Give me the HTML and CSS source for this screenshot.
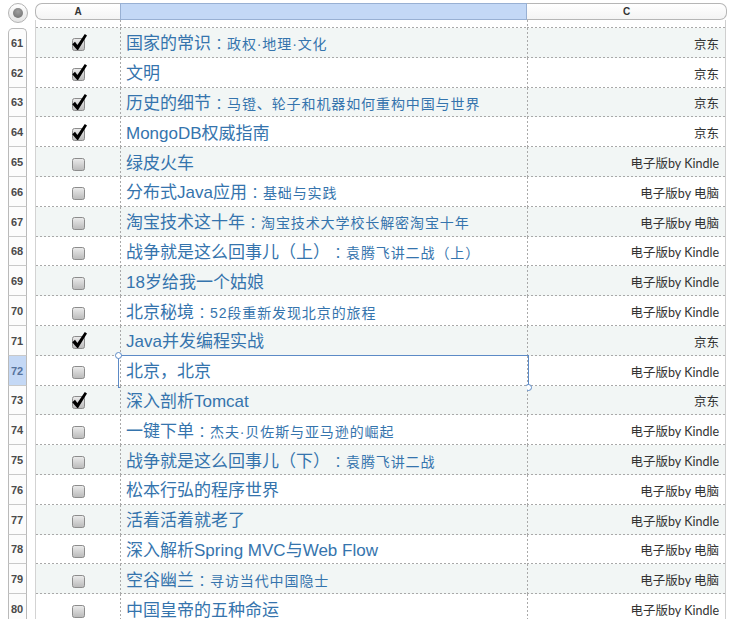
FILE: index.html
```html
<!DOCTYPE html>
<html lang="zh">
<head>
<meta charset="utf-8">
<title>Sheet</title>
<link rel="stylesheet" href="styles.css">
</head>
<body>
<svg class="defs" width="0" height="0" aria-hidden="true">
  <defs>
    <linearGradient id="gb" x1="0" y1="0" x2="0" y2="1">
      <stop offset="0" stop-color="#ececec"/>
      <stop offset="1" stop-color="#b9b9b9"/>
    </linearGradient>
    <symbol id="off" viewBox="0 0 18 18">
      <rect x="2.5" y="4.5" width="12" height="12" rx="2" fill="url(#gb)" stroke="#8c8c8c"/>
    </symbol>
    <symbol id="on" viewBox="0 0 18 18">
      <rect x="2.5" y="4.5" width="12" height="12" rx="2" fill="url(#gb)" stroke="#8c8c8c"/>
      <path d="M2.2 10.3 L5 7.8 L7.4 11 L14.8 0 L17 1.4 L8.1 16 L7.2 16 Z" fill="#000"/>
    </symbol>
  </defs>
</svg>
<div class="sheet">
  <div class="topbar">
    <div class="corner"><span class="dot"></span></div>
    <div class="colhead">
      <div class="h ha">A</div>
      <div class="h hb"></div>
      <div class="h hc">C</div>
    </div>
  </div>
  <div class="row peek">
    <div class="num blank"></div>
    <div class="cell a"></div>
    <div class="cell b"></div>
    <div class="cell c"></div>
  </div>
  <div class="rows">
    <div class="row odd first"><div class="num">61</div><div class="cell a"><svg class="cb"><use href="#on"/></svg></div><div class="cell b"><span class="line"><span class="t">国家的常识</span><span class="s"><span class="co">：</span>政权·地理·文化</span></span></div><div class="cell c">京东</div></div>
    <div class="row"><div class="num">62</div><div class="cell a"><svg class="cb"><use href="#on"/></svg></div><div class="cell b"><span class="line"><span class="t">文明</span></span></div><div class="cell c">京东</div></div>
    <div class="row odd"><div class="num">63</div><div class="cell a"><svg class="cb"><use href="#on"/></svg></div><div class="cell b"><span class="line"><span class="t">历史的细节</span><span class="s"><span class="co">：</span>马镫、轮子和机器如何重构中国与世界</span></span></div><div class="cell c">京东</div></div>
    <div class="row"><div class="num">64</div><div class="cell a"><svg class="cb"><use href="#on"/></svg></div><div class="cell b"><span class="line"><span class="t">MongoDB权威指南</span></span></div><div class="cell c">京东</div></div>
    <div class="row odd"><div class="num">65</div><div class="cell a"><svg class="cb"><use href="#off"/></svg></div><div class="cell b"><span class="line"><span class="t">绿皮火车</span></span></div><div class="cell c">电子版by Kindle</div></div>
    <div class="row"><div class="num">66</div><div class="cell a"><svg class="cb"><use href="#off"/></svg></div><div class="cell b"><span class="line"><span class="t">分布式Java应用</span><span class="s"><span class="co">：</span>基础与实践</span></span></div><div class="cell c">电子版by 电脑</div></div>
    <div class="row odd"><div class="num">67</div><div class="cell a"><svg class="cb"><use href="#off"/></svg></div><div class="cell b"><span class="line"><span class="t">淘宝技术这十年</span><span class="s"><span class="co">：</span>淘宝技术大学校长解密淘宝十年</span></span></div><div class="cell c">电子版by 电脑</div></div>
    <div class="row"><div class="num">68</div><div class="cell a"><svg class="cb"><use href="#off"/></svg></div><div class="cell b"><span class="line"><span class="t">战争就是这么回事儿（上）</span><span class="s"><span class="co">：</span>袁腾飞讲二战（上）</span></span></div><div class="cell c">电子版by Kindle</div></div>
    <div class="row odd"><div class="num">69</div><div class="cell a"><svg class="cb"><use href="#off"/></svg></div><div class="cell b"><span class="line"><span class="t">18岁给我一个姑娘</span></span></div><div class="cell c">电子版by Kindle</div></div>
    <div class="row"><div class="num">70</div><div class="cell a"><svg class="cb"><use href="#off"/></svg></div><div class="cell b"><span class="line"><span class="t">北京秘境</span><span class="s"><span class="co">：</span>52段重新发现北京的旅程</span></span></div><div class="cell c">电子版by Kindle</div></div>
    <div class="row odd"><div class="num">71</div><div class="cell a"><svg class="cb"><use href="#on"/></svg></div><div class="cell b"><span class="line"><span class="t">Java并发编程实战</span></span></div><div class="cell c">京东</div></div>
    <div class="row"><div class="num sel-num">72</div><div class="cell a"><svg class="cb"><use href="#off"/></svg></div><div class="cell b selected"><span class="line"><span class="t">北京，北京</span></span><span class="sel"><span class="handle tl"></span><span class="handle br"></span></span></div><div class="cell c">电子版by Kindle</div></div>
    <div class="row odd"><div class="num">73</div><div class="cell a"><svg class="cb"><use href="#on"/></svg></div><div class="cell b"><span class="line"><span class="t">深入剖析Tomcat</span></span></div><div class="cell c">京东</div></div>
    <div class="row"><div class="num">74</div><div class="cell a"><svg class="cb"><use href="#off"/></svg></div><div class="cell b"><span class="line"><span class="t">一键下单</span><span class="s"><span class="co">：</span>杰夫·贝佐斯与亚马逊的崛起</span></span></div><div class="cell c">电子版by Kindle</div></div>
    <div class="row odd"><div class="num">75</div><div class="cell a"><svg class="cb"><use href="#off"/></svg></div><div class="cell b"><span class="line"><span class="t">战争就是这么回事儿（下）</span><span class="s"><span class="co">：</span>袁腾飞讲二战</span></span></div><div class="cell c">电子版by Kindle</div></div>
    <div class="row"><div class="num">76</div><div class="cell a"><svg class="cb"><use href="#off"/></svg></div><div class="cell b"><span class="line"><span class="t">松本行弘的程序世界</span></span></div><div class="cell c">电子版by 电脑</div></div>
    <div class="row odd"><div class="num">77</div><div class="cell a"><svg class="cb"><use href="#off"/></svg></div><div class="cell b"><span class="line"><span class="t">活着活着就老了</span></span></div><div class="cell c">电子版by Kindle</div></div>
    <div class="row"><div class="num">78</div><div class="cell a"><svg class="cb"><use href="#off"/></svg></div><div class="cell b"><span class="line"><span class="t">深入解析Spring MVC与Web Flow</span></span></div><div class="cell c">电子版by 电脑</div></div>
    <div class="row odd"><div class="num">79</div><div class="cell a"><svg class="cb"><use href="#off"/></svg></div><div class="cell b"><span class="line"><span class="t">空谷幽兰</span><span class="s"><span class="co">：</span>寻访当代中国隐士</span></span></div><div class="cell c">电子版by 电脑</div></div>
    <div class="row"><div class="num">80</div><div class="cell a"><svg class="cb"><use href="#off"/></svg></div><div class="cell b"><span class="line"><span class="t">中国皇帝的五种命运</span></span></div><div class="cell c">电子版by Kindle</div></div>
  </div>
</div>
</body>
</html>
```
FILE: styles.css
```css
html, body {
  margin: 0;
  padding: 0;
  background: #ffffff;
}
body {
  font-family: "Liberation Sans", "Noto Sans CJK SC", sans-serif;
}
.defs {
  position: absolute;
  width: 0;
  height: 0;
  overflow: hidden;
}
.sheet {
  width: 729px;
  height: 619px;
  overflow: hidden;
}
.topbar {
  display: flex;
  align-items: flex-start;
  height: 20px;
  padding: 3px 0 0 8px;
  box-sizing: border-box;
}
.corner {
  width: 20px;
  height: 20px;
  box-sizing: border-box;
  border-radius: 50%;
  border: 1px solid #b3b3b3;
  background: linear-gradient(#ffffff, #e4e4e4);
  display: flex;
  align-items: center;
  justify-content: center;
  position: relative;
  z-index: 2;
}
.dot {
  width: 10px;
  height: 10px;
  border-radius: 50%;
  background: radial-gradient(circle at 50% 35%, #a0a0a0, #6c6c6c);
}
.colhead {
  display: flex;
  margin-left: 7px;
  height: 17px;
  position: relative;
  z-index: 2;
}
.h {
  box-sizing: border-box;
  height: 17px;
  border-top: 1px solid #b6b6b6;
  border-bottom: 1px solid #b6b6b6;
  background: linear-gradient(#ffffff, #f4f4f4);
  font: bold 10px "Liberation Sans", sans-serif;
  color: #333;
  display: flex;
  align-items: center;
  justify-content: center;
}
.ha {
  width: 85px;
  border-left: 1px solid #b6b6b6;
  border-radius: 7px 0 0 7px;
}
.hb {
  width: 407px;
  background: #c3d8f6;
  border-top-color: #98b0d3;
  border-bottom-color: #98b0d3;
  border-left: 1px solid #98b0d3;
  border-right: 1px solid #98b0d3;
}
.hc {
  width: 200px;
  border-right: 1px solid #b6b6b6;
  border-radius: 0 7px 7px 0;
}
.row {
  display: flex;
  height: 29.8px;
}
.peek {
  height: 8px;
}
.num {
  margin-left: 8px;
  margin-right: 8px;
  width: 19px;
  flex: none;
  box-sizing: border-box;
  border-left: 1px solid #bababa;
  border-right: 1px solid #bababa;
  border-bottom: 1px solid #c9c9c9;
  background: #fcfcfc;
  font: bold 11px "Liberation Sans", sans-serif;
  color: #4a4a4a;
  display: flex;
  align-items: center;
  padding-left: 2px;
  padding-top: 1px;
}
.num.blank {
  border: none;
  background: transparent;
}
.first .num {
  border-top: 1px solid #bababa;
  border-radius: 5px 5px 0 0;
}
.num.sel-num {
  background: #c4d8f5;
  color: #55729c;
}
.cell {
  box-sizing: border-box;
  display: flex;
  align-items: center;
  white-space: nowrap;
  overflow: visible;
  background-image: repeating-linear-gradient(90deg, #a9a9a9 0 2px, transparent 2px 4px);
  background-size: 100% 1px;
  background-position: left bottom;
  background-repeat: no-repeat;
}
.odd .cell {
  background-color: #f2f6f5;
}
.a {
  width: 85px;
  flex: none;
  border-left: 1px solid #d3d3d3;
  justify-content: center;
  padding-left: 2px;
}
.b, .c {
  background-image:
    repeating-linear-gradient(90deg, #a9a9a9 0 2px, transparent 2px 4px),
    repeating-linear-gradient(180deg, #a9a9a9 0 2px, transparent 2px 4px);
  background-size: 100% 1px, 1px 100%;
  background-position: left bottom, left top;
  background-repeat: no-repeat, no-repeat;
}
.b {
  width: 407px;
  flex: none;
  padding-left: 6px;
  color: #3574ad;
  position: relative;
}
.c {
  width: 199px;
  flex: none;
  border-right: 1px solid #cfcfcf;
  justify-content: flex-end;
  padding-right: 6px;
  font: 12.5px "Lato", "Noto Sans CJK SC", sans-serif;
  color: #333;
  padding-top: 1px;
}
.cb {
  width: 18px;
  height: 18px;
  display: block;
  margin-top: 1px;
  overflow: visible;
}
.line {
  padding-bottom: 2px;
}
.t {
  font-size: 17px;
}
.s {
  font-size: 14px;
  letter-spacing: 0.9px;
}
.co {
  font-family: "Noto Sans CJK TC", sans-serif;
  letter-spacing: 0;
  display: inline-block;
  width: 16px;
  text-align: center;
}
.sel {
  position: absolute;
  left: -2px;
  top: -1px;
  right: -2px;
  bottom: -2px;
  border: 1px solid #5c8ac6;
  pointer-events: none;
}
.handle {
  position: absolute;
  width: 7px;
  height: 7px;
  box-sizing: border-box;
  border-radius: 50%;
  border: 1px solid #5c8ac6;
  background: #fff;
}
.handle.tl {
  left: -4px;
  top: -4px;
}
.handle.br {
  right: -4px;
  bottom: -4px;
}
```
